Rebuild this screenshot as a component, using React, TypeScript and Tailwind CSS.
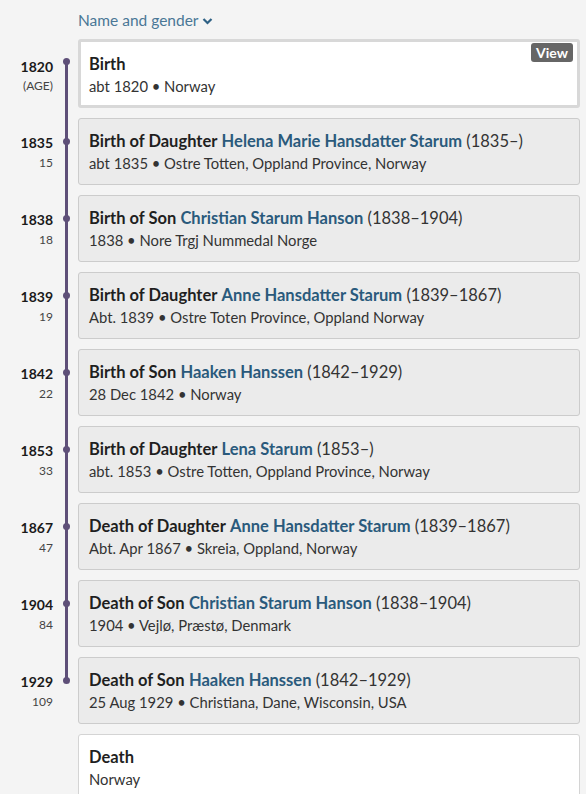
import React from 'react';

interface TimelineEvent {
  year?: string;
  age?: string;
  title: string;
  name?: string;
  dates?: string;
  place: string;
  selected?: boolean;
  white?: boolean;
}

const events: TimelineEvent[] = [
  { year: '1820', age: '(AGE)', title: 'Birth', place: 'abt 1820 • Norway', selected: true },
  { year: '1835', age: '15', title: 'Birth of Daughter', name: 'Helena Marie Hansdatter Starum', dates: '(1835–)', place: 'abt 1835 • Ostre Totten, Oppland Province, Norway' },
  { year: '1838', age: '18', title: 'Birth of Son', name: 'Christian Starum Hanson', dates: '(1838–1904)', place: '1838 • Nore Trgj Nummedal Norge' },
  { year: '1839', age: '19', title: 'Birth of Daughter', name: 'Anne Hansdatter Starum', dates: '(1839–1867)', place: 'Abt. 1839 • Ostre Toten Province, Oppland Norway' },
  { year: '1842', age: '22', title: 'Birth of Son', name: 'Haaken Hanssen', dates: '(1842–1929)', place: '28 Dec 1842 • Norway' },
  { year: '1853', age: '33', title: 'Birth of Daughter', name: 'Lena Starum', dates: '(1853–)', place: 'abt. 1853 • Ostre Totten, Oppland Province, Norway' },
  { year: '1867', age: '47', title: 'Death of Daughter', name: 'Anne Hansdatter Starum', dates: '(1839–1867)', place: 'Abt. Apr 1867 • Skreia, Oppland, Norway' },
  { year: '1904', age: '84', title: 'Death of Son', name: 'Christian Starum Hanson', dates: '(1838–1904)', place: '1904 • Vejlø, Præstø, Denmark' },
  { year: '1929', age: '109', title: 'Death of Son', name: 'Haaken Hanssen', dates: '(1842–1929)', place: '25 Aug 1929 • Christiana, Dane, Wisconsin, USA' },
  { title: 'Death', place: 'Norway', white: true },
];

function App() {
  const lastDated = events.filter(e => e.year).length - 1;

  return (
    <div className="min-h-screen bg-[#f4f4f4] font-['Lato',sans-serif] text-[#222]">
      <div className="pl-[78px] pt-[9px] pb-[8px] flex items-center gap-1 text-[15.5px] leading-[22px] text-[#4a7796]">
        <span>Name and gender</span>
        <svg width="11" height="10" viewBox="0 0 11 10" className="mt-[2px]">
          <path d="M1.5 3 L5.5 7 L9.5 3" fill="none" stroke="#2f6185" strokeWidth="2.2" />
        </svg>
      </div>

      <div className="flex flex-col">
        {events.map((ev, i) => (
          <div key={i} className="flex">
            {/* year / age */}
            <div className="w-[56px] shrink-0 pr-[3px] text-right">
              {ev.year && (
                <>
                  <div className={`${ev.selected ? 'mt-[19px]' : 'mt-[16px]'} text-[14px] font-bold leading-[18px] text-[#1a1a1a]`}>{ev.year}</div>
                  <div className={`${ev.selected ? 'mt-[2px]' : 'mt-[3px]'} text-[12px] leading-[16px] text-[#444]`}>{ev.age}</div>
                </>
              )}
            </div>

            {/* line */}
            <div className="relative w-[22px] shrink-0">
              {ev.year && (
                <>
                  <div
                    className={`absolute left-[9px] w-[3px] bg-[#5e4f78] ${i === 0 ? 'top-[22px]' : 'top-0'} ${i === lastDated ? 'h-[23px]' : 'bottom-0'}`}
                  />
                  <div className={`absolute left-[7px] ${ev.selected ? 'top-[19px]' : 'top-[20px]'} h-[7px] w-[7px] rounded-full bg-[#5e4f78]`} />
                </>
              )}
            </div>

            {/* card */}
            <div className="flex-1 pr-[6px] pb-[10px]">
              <div
                className={`relative rounded-[3px] ${
                  ev.selected
                    ? 'border-[3px] border-[#d8d8d8] bg-white pl-[8px] pt-[11px] pb-[8px]'
                    : ev.white
                    ? 'border border-[#d4d4d4] bg-white pl-[10px] pt-[11px] pb-[10px]'
                    : 'border border-[#cccccc] bg-[#ebebeb] pl-[10px] pt-[11px] pb-[10px]'
                }`}
              >
                {ev.selected && (
                  <span className="absolute right-[4px] top-[1px] rounded-[3px] bg-[#666] px-[5px] text-[14px] font-bold leading-[19px] text-white">
                    View
                  </span>
                )}
                <div className="text-[16.5px] leading-[22px]">
                  <span className="font-bold text-[#1f1f1f]">{ev.title}</span>
                  {ev.name && (
                    <>
                      {' '}
                      <span className="font-bold text-[#2a5a7c]">{ev.name}</span>{' '}
                      <span className="text-[#333]">{ev.dates}</span>
                    </>
                  )}
                </div>
                <div className="text-[14.8px] leading-[22px] text-[#333]">{ev.place}</div>
              </div>
            </div>
          </div>
        ))}
      </div>
    </div>
  );
}

export default App;
